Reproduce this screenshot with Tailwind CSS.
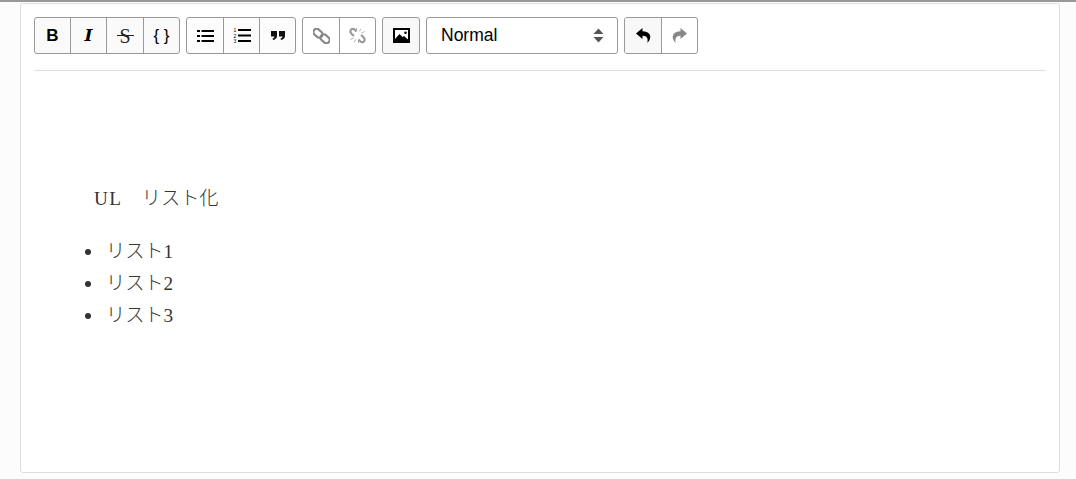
<!DOCTYPE html>
<html lang="en">

<head>
  <meta charset="UTF-8" />
  <title>Editor</title>
  <script src="https://cdn.jsdelivr.net/npm/@tailwindcss/browser@4"></script>
</head>

<body class="bg-[#fcfcfc] h-[479px] overflow-hidden font-['Liberation_Sans',sans-serif]">
  <div class="h-[2px] bg-[#999]"></div>

  <!-- Editor card -->
  <div class="mt-px ml-[20px] w-[1040px] h-[470px] bg-white border border-[#ddd] rounded-[3px] px-[13px]">

    <!-- Toolbar -->
    <div class="flex gap-[6px] pt-[13px] pb-[16px] border-b border-[#e0e0e0] h-[67px]">

      <div class="flex h-[37px] border border-[#999] rounded-[3px] bg-[#fafafa] text-black divide-x divide-[#999]">
        <button class="w-[36px] flex items-center justify-center font-bold text-[17px] pt-px">B</button>
        <button class="w-[36px] flex items-center justify-center font-['DejaVu_Serif',serif] font-bold italic text-[17px]">I</button>
        <button class="w-[37px] relative flex items-center justify-center font-['Liberation_Serif',serif] text-[20px] text-[#222]">
          S
          <span class="absolute left-[10px] top-[17px] w-[17px] h-px bg-[#222]"></span>
        </button>
        <button class="w-[35px] flex items-center justify-center text-[17px]">{ }</button>
      </div>

      <div class="flex h-[37px] border border-[#999] rounded-[3px] bg-[#fcfcfc] divide-x divide-[#999]">
        <button class="w-[37px] flex items-center justify-center">
          <svg width="17" height="14" viewBox="0 0 17 14" fill="#000">
            <rect x="0" y="1" width="3" height="2" /><rect x="0" y="6" width="3" height="2" /><rect x="0" y="11" width="3" height="2" />
            <rect x="4.500" y="1" width="12.500" height="2" /><rect x="4.500" y="6" width="12.500" height="2" /><rect x="4.500" y="11" width="12.500" height="2" />
          </svg>
        </button>
        <button class="w-[36px] flex items-center justify-center">
          <svg width="18" height="15" viewBox="0 0 18 15" fill="#000" font-size="5" font-family="Liberation Sans">
            <text x="0.500" y="4">1</text><text x="0.500" y="9.500">2</text><text x="0.500" y="15">3</text>
            <rect x="5" y="1" width="13" height="2" /><rect x="5" y="6.500" width="13" height="2" /><rect x="5" y="12" width="13" height="2" />
          </svg>
        </button>
        <button class="w-[35px] flex items-center justify-center">
          <svg width="14" height="9" viewBox="0 0 14 9" fill="#111">
            <path d="M0 0h6v5c0 2-1.500 3.500-4 4l-.5-1.500c1.200-.4 1.800-1 1.900-2H0z" />
            <path d="M8 0h6v5c0 2-1.500 3.500-4 4l-.5-1.500c1.200-.4 1.800-1 1.900-2H8z" />
          </svg>
        </button>
      </div>

      <div class="flex h-[37px] border border-[#999] rounded-[3px] bg-white divide-x divide-[#999]">
        <button class="w-[37px] flex items-center justify-center">
          <svg width="17" height="16" viewBox="0 0 17 16" fill="none" stroke="#888" stroke-width="2.200">
            <rect x="0" y="2" width="10" height="6.500" rx="3.200" transform="rotate(42 5 5.200)" />
            <rect x="7" y="7.500" width="10" height="6.500" rx="3.200" transform="rotate(42 12 10.800)" />
          </svg>
        </button>
        <button class="w-[35px] flex items-center justify-center">
          <svg width="17" height="17" viewBox="0 0 17 17" fill="none" stroke="#999" stroke-width="2.200">
            <path d="M7.500 4.500 5.500 2.500C3.500 .8 1 2.500 1.500 5c.2 1 .8 1.500 1.500 2.200L5 9" />
            <path d="M9.500 12.500l2 2c2 1.700 4.500 0 4-2.500-.2-1-.8-1.500-1.500-2.200L12 8" />
            <path d="M10 4.500l2-2.500M12.500 6l3-1.500M7.500 1v2.500M7 12.500l-2 2.500M4.500 11l-3 1.500M9.500 16v-2.500" stroke-width="0.800" />
          </svg>
        </button>
      </div>

      <button class="w-[38px] h-[37px] border border-[#999] rounded-[3px] bg-[#f8f8f8] flex items-center justify-center">
        <svg width="17" height="15" viewBox="0 0 17 15">
          <rect width="17" height="15" fill="#000" />
          <rect x="2" y="2" width="13" height="11" fill="#fff" />
          <circle cx="12.500" cy="4.800" r="1.300" fill="#000" />
          <path d="M2 13V11l4.500-5 3 3 1.500-1 4 3.500V13z" fill="#000" />
        </svg>
      </button>

      <div class="w-[192px] h-[37px] border border-[#999] rounded-[3px] bg-white flex items-center justify-between pl-[14px] pr-[13px]">
        <span class="text-[17.5px] text-black">Normal</span>
        <svg width="11" height="15" viewBox="0 0 11 15" fill="#555">
          <path d="M5.500 0.500 10.500 6H0.500zM5.500 14.500 0.500 9H10.500z" />
        </svg>
      </div>

      <div class="flex h-[37px] border border-[#999] rounded-[3px] divide-x divide-[#999]">
        <button class="w-[37px] bg-[#f8f8f8] rounded-l-[3px] flex items-center justify-center">
          <svg width="15" height="15" viewBox="0 0 15 15" fill="#000">
            <path d="M6.500 0 0 5.500 6.500 11V7.800c3 0 4.500 1 5 3.200.2 1 .2 2.500-.3 4C14 12.500 15 9.500 13.800 6.800 12.800 4.500 10 3.300 6.500 3.300z" />
          </svg>
        </button>
        <button class="w-[35px] flex items-center justify-center">
          <svg width="15" height="15" viewBox="0 0 15 15" fill="#888">
            <path d="M8.500 0 15 5.500 8.500 11V7.800c-3 0-4.500 1-5 3.200-.2 1-.2 2.500.3 4C1 12.500 0 9.500 1.200 6.800 2.200 4.500 5 3.300 8.500 3.300z" />
          </svg>
        </button>
      </div>
    </div>

    <!-- Content -->
    <div class="pt-[112px] pl-[60px] font-['Liberation_Serif','Noto_Sans_CJK_JP',serif] text-[19.2px] text-[#333] font-light">
      <p class="h-[32px] leading-[32px]"><span class="tracking-[1.5px]">UL</span>　リスト化</p>
      <ul class="mt-[21px] -ml-[9px]">
        <li class="h-[32px] leading-[32px] flex items-center"><span class="w-[6px] h-[6px] rounded-full bg-[#333] mr-[15px]"></span>リスト1</li>
        <li class="h-[32px] leading-[32px] flex items-center"><span class="w-[6px] h-[6px] rounded-full bg-[#333] mr-[15px]"></span>リスト2</li>
        <li class="h-[32px] leading-[32px] flex items-center"><span class="w-[6px] h-[6px] rounded-full bg-[#333] mr-[15px]"></span>リスト3</li>
      </ul>
    </div>
  </div>
</body>

</html>
